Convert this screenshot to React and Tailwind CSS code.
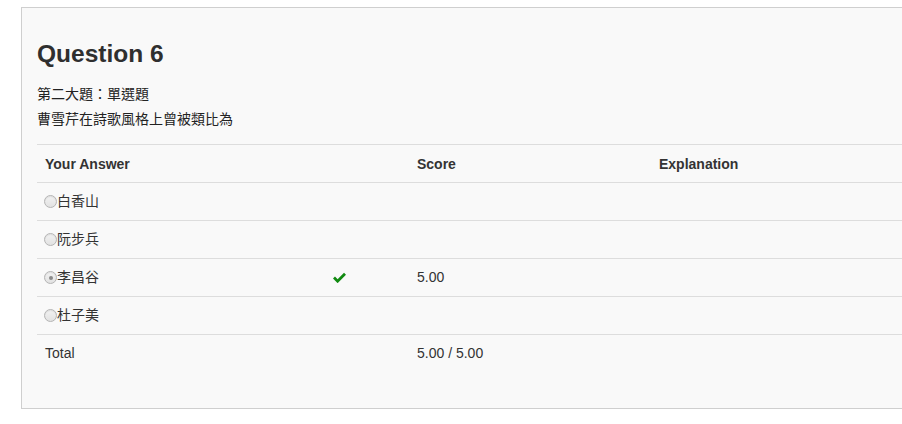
const font = { fontFamily: '"Liberation Sans", "Noto Sans CJK TC", sans-serif' };

const rows = [
  { label: "白香山" },
  { label: "阮步兵" },
  { label: "李昌谷", checked: true, correct: true, score: "5.00" },
  { label: "杜子美" },
];

function Radio({ checked }) {
  return (
    <span className="inline-flex items-center justify-center w-[13px] h-[13px] rounded-full border border-[#b5b5b5] bg-gradient-to-b from-[#f2f2f2] to-[#e2e2e2] shadow-[inset_0_1px_1px_rgba(0,0,0,0.08)]">
      {checked && <span className="w-[4px] h-[4px] rounded-full bg-[#8a8a8a]" />}
    </span>
  );
}

function Check() {
  return (
    <svg width="13" height="11" viewBox="0 0 13 11" className="block">
      <path d="M1 5.6 L4.6 9.2 L12 1.8" fill="none" stroke="#118a11" strokeWidth="2.8" strokeLinejoin="miter" />
    </svg>
  );
}

export default function App() {
  return (
    <div className="w-[902px] h-[424px] bg-white overflow-hidden pt-[7px] pl-[21px]" style={font}>
      <div className="w-[940px] h-[402px] bg-[#f9f9f9] border border-[#cfcfcf] pt-[26px] pl-[15px] text-[#333]">
        <h2 className="text-[24.5px] leading-[40px] font-bold text-[#2f2f2f] mb-2">Question 6</h2>
        <div className="text-[14px] leading-[25px] text-[#222]">
          <div>第二大題：單選題</div>
          <div>曹雪芹在詩歌風格上曾被類比為</div>
        </div>
        <table className="mt-3 w-[920px] text-[14px] text-[#333] border-collapse table-fixed">
          <thead>
            <tr className="border-t border-[#dddddd] h-[38px]">
              <th className="text-left font-bold pl-2 pt-[2px] w-[281px]">Your Answer</th>
              <th className="w-[91px]"></th>
              <th className="text-left font-bold pl-2 pt-[2px] w-[242px]">Score</th>
              <th className="text-left font-bold pl-2 pt-[2px]">Explanation</th>
            </tr>
          </thead>
          <tbody>
            {rows.map((r) => (
              <tr key={r.label} className="border-t border-[#dddddd] h-[38px]">
                <td className="pl-[7px]">
                  <span className="flex items-center">
                    <Radio checked={r.checked} />
                    <span>{r.label}</span>
                  </span>
                </td>
                <td className="pl-[15px]">{r.correct && <Check />}</td>
                <td className="pl-2">{r.score}</td>
                <td></td>
              </tr>
            ))}
            <tr className="border-t border-[#dddddd] h-[38px]">
              <td className="pl-2">Total</td>
              <td></td>
              <td className="pl-2">5.00 / 5.00</td>
              <td></td>
            </tr>
          </tbody>
        </table>
      </div>
    </div>
  );
}
